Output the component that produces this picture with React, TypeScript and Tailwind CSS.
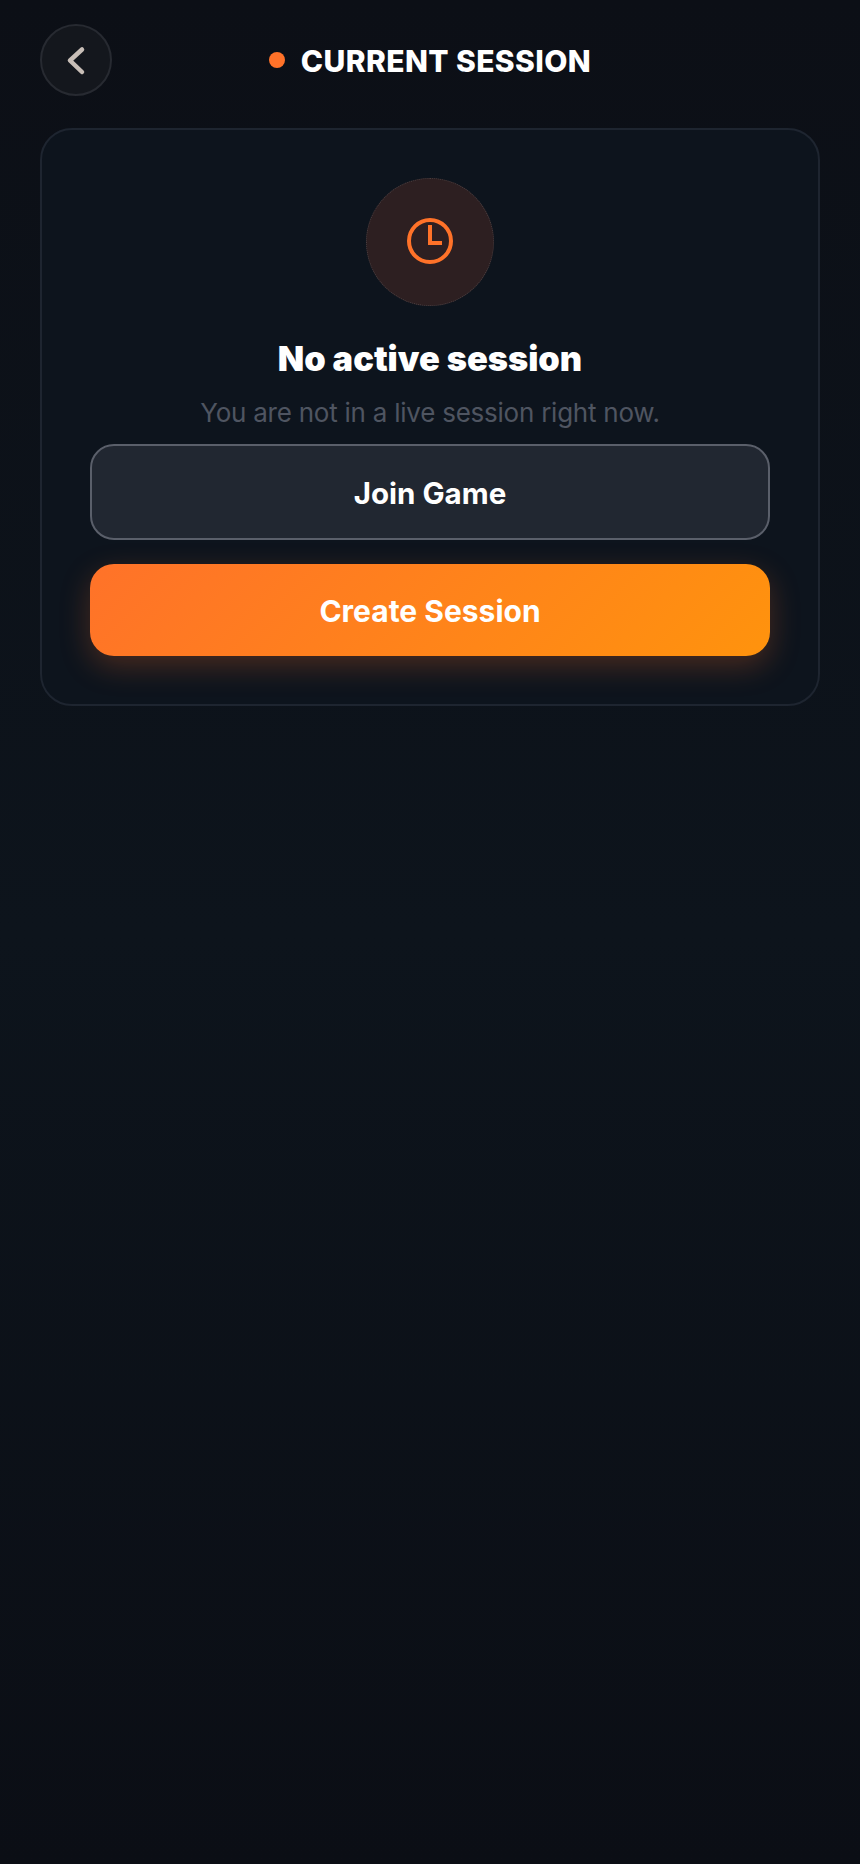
export default function App() {
  return (
    <div className="min-h-[1864px] bg-[linear-gradient(180deg,#0c0f16_0%,#0d141c_50%,#0b0e15_100%)] px-10 pt-6 font-['Inter',sans-serif]">
      <header className="relative flex h-[72px] items-center">
        <button className="flex h-[72px] w-[72px] items-center justify-center rounded-full border-2 border-[#272a31] bg-[#14171d]">
          <svg width="40" height="40" viewBox="0 0 40 40" fill="none" stroke="#c8beb7" strokeWidth="4.5" strokeLinecap="round" strokeLinejoin="round">
            <path d="M26 9.5 L14 20.5 L26 32" />
          </svg>
        </button>
        <div className="flex flex-1 items-center justify-center gap-4 pr-[72px]">
          <span className="h-4 w-4 rounded-full bg-[#ff7229]" />
          <h1 className="pt-px text-[30px] leading-9 font-extrabold tracking-[0.4px] text-white">CURRENT SESSION</h1>
        </div>
      </header>
      <main className="mt-8 flex flex-col items-center rounded-[32px] border-2 border-[#1e2530] bg-[#0d141d] p-12">
        <div className="flex h-32 w-32 items-center justify-center rounded-full border border-dotted border-[#4a3f41] bg-[#2d1f21]">
          <svg className="-mt-[2px]" width="48" height="48" viewBox="0 0 48 48" fill="none" stroke="#ff7229" strokeWidth="4">
            <circle cx="24" cy="24" r="21" />
            <path d="M24 8 V26 H36" />
          </svg>
        </div>
        <h2 className="mt-[29px] text-[34.4px] leading-[48px] font-black text-white">No active session</h2>
        <p className="mt-3 text-[26px] leading-9 tracking-[-0.24px] text-[#4f5561]">You are not in a live session right now.</p>
        <button className="mt-[13px] h-24 w-full rounded-3xl border-2 border-[#5a5f6a] bg-[#212731] pt-[2px] text-[29.5px] font-bold text-white">Join Game</button>
        <button className="mt-6 h-[92px] w-full rounded-3xl bg-[linear-gradient(135deg,#ff7229,#ff930d)] pt-[2px] text-[30px] font-bold text-white shadow-[0_10px_30px_rgba(255,112,41,0.25)]">Create Session</button>
      </main>
    </div>
  );
}
